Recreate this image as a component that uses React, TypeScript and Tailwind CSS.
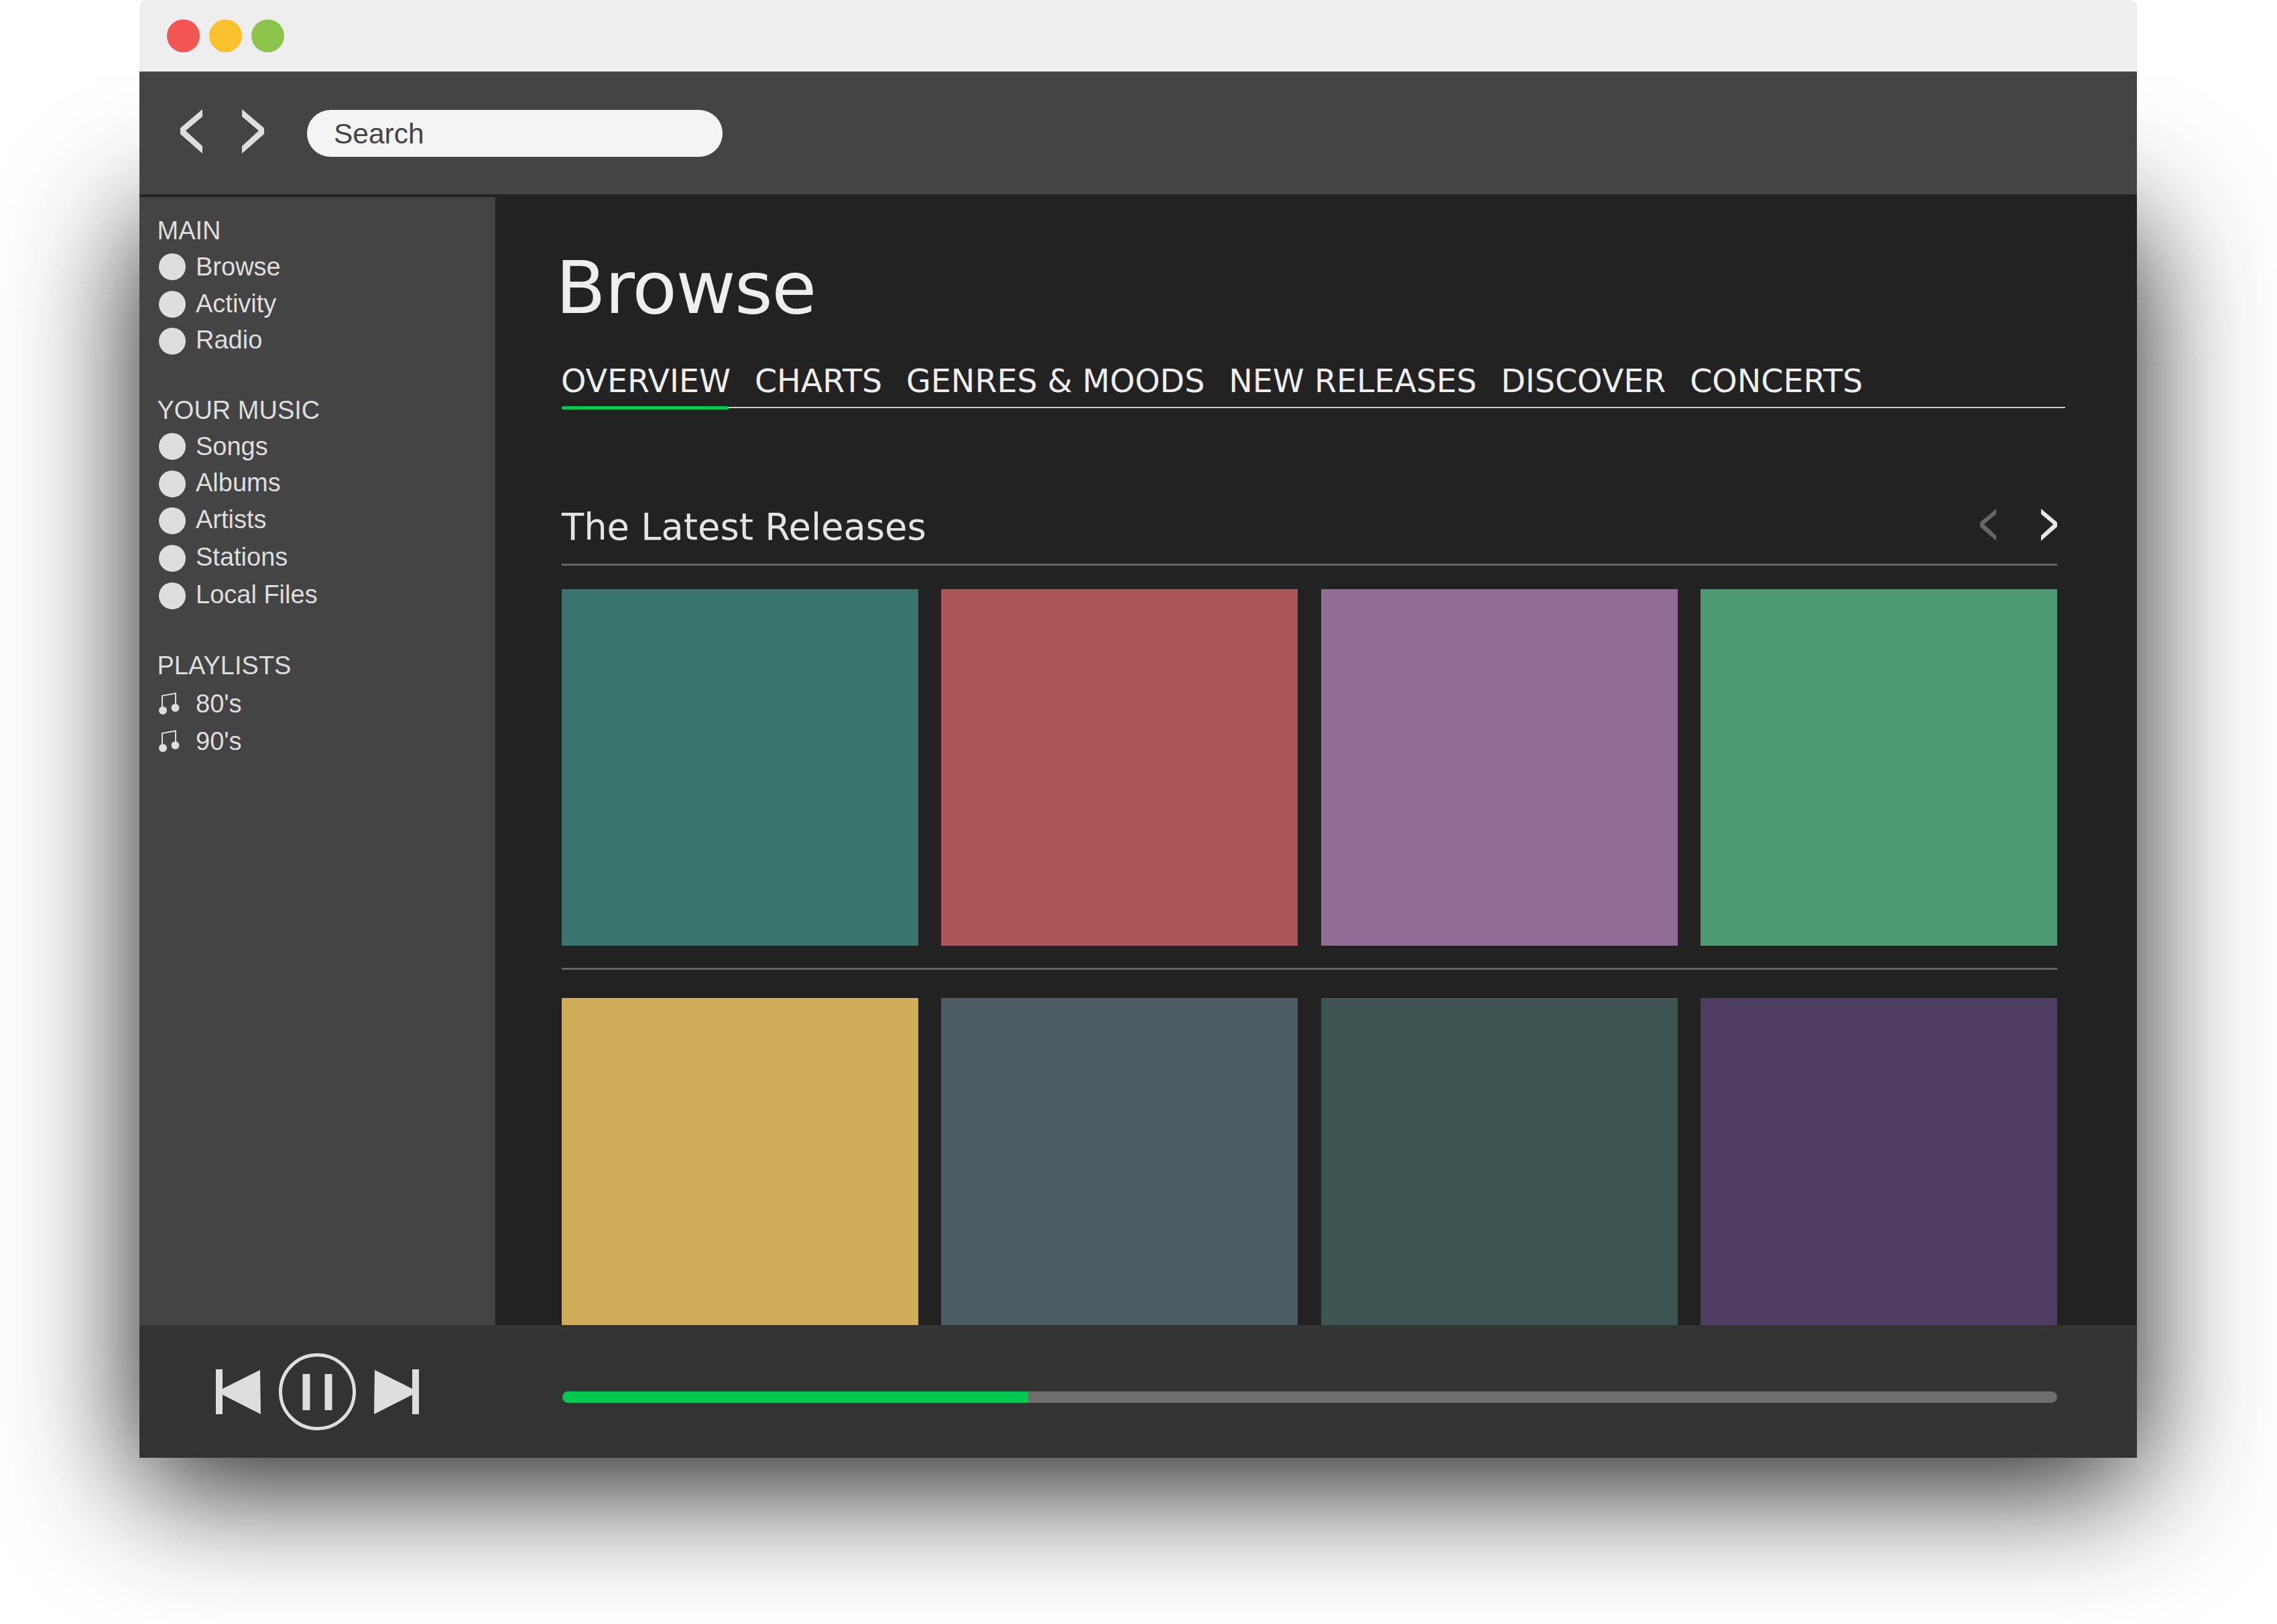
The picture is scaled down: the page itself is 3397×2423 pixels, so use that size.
const SANS = 'font-["Liberation_Sans",Arial,sans-serif]'

type NavItem = { label: string; nudge?: string }

const MAIN: NavItem[] = [{ label: 'Browse', nudge: 'mt-[2px]' }, { label: 'Activity' }, { label: 'Radio', nudge: '-mt-[4px]' }]
const MUSIC: NavItem[] = [
  { label: 'Songs', nudge: 'mt-[2px]' },
  { label: 'Albums', nudge: '-mt-[2px]' },
  { label: 'Artists', nudge: '-mt-[4px]' },
  { label: 'Stations', nudge: '-mt-[2px]' },
  { label: 'Local Files', nudge: '-mt-[2px]' },
]
const PLAYLISTS: NavItem[] = [
  { label: "80's", nudge: 'mt-[2px]' },
  { label: "90's", nudge: 'mt-[2px]' },
]
const TABS = ['OVERVIEW', 'CHARTS', 'GENRES & MOODS', 'NEW RELEASES', 'DISCOVER', 'CONCERTS']
const TILES = [
  ['bg-[#39746f]', 'bg-[#aa5558]', 'bg-[#906c95]', 'bg-[#4d9a72]'],
  ['bg-[#cfac58]', 'bg-[#4c5a61]', 'bg-[#3f5553]', 'bg-[#4f3d62]'],
]

function ChevronLeft({ className }: { className: string }) {
  return (
    <svg viewBox="0 0 33 66" className={className} fill="currentColor">
      <polygon points="33,0 33,11 8,32 33,55 33,66 0,37 0,28" />
    </svg>
  )
}

function ChevronRight({ className }: { className: string }) {
  return (
    <svg viewBox="0 0 33 66" className={className} fill="currentColor">
      <polygon points="0,0 0,11 25,32 0,55 0,66 33,37 33,28" />
    </svg>
  )
}

function NoteIcon() {
  return (
    <svg viewBox="0 0 31 33" className="w-[31px] h-[33px] text-[#dedede]" fill="none">
      <circle cx="6" cy="27" r="6" fill="currentColor" />
      <circle cx="24.500" cy="23" r="6" fill="currentColor" />
      <path d="M5 26V5L25 1.500V23" stroke="currentColor" strokeWidth="2" />
    </svg>
  )
}

function NavRow({ item, icon }: { item: NavItem; icon?: boolean }) {
  return (
    <div className="flex items-center h-[55.7px] text-[38px] text-[#dedede]">
      <div className="w-[57.500px] pl-[2.500px] shrink-0">
        {icon ? <NoteIcon /> : <div className="w-[40px] h-[40px] rounded-full bg-[#dedede]" />}
      </div>
      <span className={item.nudge}>{item.label}</span>
    </div>
  )
}

function NavSection({ title, items, icon, titleHeight }: { title: string; items: NavItem[]; icon?: boolean; titleHeight: string }) {
  return (
    <section>
      <h3 className={`${titleHeight} leading-[56px] text-[38px] text-[#dedede]`}>{title}</h3>
      {items.map((item) => (
        <NavRow key={item.label} item={item} icon={icon} />
      ))}
    </section>
  )
}

function Player() {
  return (
    <div className="flex items-center gap-[27px] text-[#dedede]">
      <svg viewBox="0 0 67 67" className="w-[67px] h-[67px]" fill="currentColor">
        <rect x="0" y="0" width="10" height="67" />
        <polygon points="10,29 66,1 67,67 10,38" />
      </svg>
      <svg viewBox="0 0 115 115" className="w-[115px] h-[115px]" fill="currentColor">
        <circle cx="57.500" cy="57.500" r="55" fill="none" stroke="currentColor" strokeWidth="5" />
        <rect x="35.500" y="31" width="11" height="54" />
        <rect x="68.500" y="31" width="11" height="54" />
      </svg>
      <svg viewBox="0 0 67 67" className="w-[67px] h-[67px]" fill="currentColor">
        <rect x="57" y="0" width="10" height="67" />
        <polygon points="57,29 1,1 0,67 57,38" />
      </svg>
    </div>
  )
}

export default function App() {
  return (
    <div className={`w-[3397px] h-[2423px] overflow-hidden bg-white pl-[208px] ${SANS}`}>
      <div className="w-[2980px] h-[2175px] flex flex-col">
        {/* title and toolbar stay above the body's shadow */}
        <header className="relative z-10 h-[107px] shrink-0 flex items-center gap-[14px] pl-[41px] bg-[#eeeeee] border-b border-[#bbbbbb] rounded-t-[10px]">
          <div className="w-[49px] h-[49px] rounded-full bg-[#f25552]" />
          <div className="w-[49px] h-[49px] rounded-full bg-[#fcc12f]" />
          <div className="w-[49px] h-[49px] rounded-full bg-[#8dc44c]" />
        </header>
        <div className="relative z-10 h-[183px] shrink-0 flex items-center pl-[61px] bg-[#444444] text-[#dedede]">
          <ChevronLeft className="w-[33px] h-[66px] -mt-[5px]" />
          <ChevronRight className="w-[33px] h-[66px] -mt-[5px] ml-[59px]" />
          <div className="ml-[64px] w-[620px] h-[70px] rounded-full bg-[#f4f4f4] pl-[40px] pt-[3px] flex items-center text-[42.500px] text-[#444444]">
            Search
          </div>
        </div>
        <div className="relative z-10 h-[4px] shrink-0 bg-[#222222]" />

        <div className="flex-1 min-h-0 flex flex-col shadow-[0_40px_180px_rgba(0,0,0,0.9)]">
          <div className="flex-1 min-h-0 flex">
            <aside className="w-[531px] shrink-0 bg-[#444444] border-r border-[#3a3a3a] pl-[26.500px] pt-[22px] flex flex-col">
              <NavSection title="MAIN" items={MAIN} titleHeight="h-[54px]" />
              <div className="h-[47px]" />
              <NavSection title="YOUR MUSIC" items={MUSIC} titleHeight="h-[54px]" />
              <div className="h-[48px]" />
              <NavSection title="PLAYLISTS" items={PLAYLISTS} icon titleHeight="h-[57px]" />
            </aside>
            <main className="flex-1 min-w-0 overflow-hidden bg-[#222222] pl-[99px] pr-[119px] pt-[81px] font-['DejaVu_Sans',sans-serif]">
              <h1 className="-ml-[9px] text-[109px] leading-none tracking-[-1.500px] text-[#eeeeee]">Browse</h1>
              <nav className="mt-[55px] -mr-[12px] flex gap-[37px] h-[70px] border-b-2 border-[#cccccc] text-[47.500px] leading-[60px] text-[#eeeeee]">
                {TABS.map((tab, i) => (
                  <div key={tab} className="relative h-[70px] -ml-[1px]">
                    {tab}
                    {i === 0 && <div className="absolute left-[1px] right-[3px] top-[67px] h-[5px] rounded-full bg-[#00c853]" />}
                  </div>
                ))}
              </nav>
              <div className="mt-[146px] h-[89px] flex items-start justify-between border-b-[3px] border-[#666666]">
                <h2 className="text-[54.300px] leading-[64px] text-[#e4e4e4]">The Latest Releases</h2>
                <div className="flex gap-[67px] pt-[4px]">
                  <ChevronLeft className="w-[24px] h-[48px] text-[#666666]" />
                  <ChevronRight className="w-[24px] h-[48px] text-[#e6e6e6]" />
                </div>
              </div>
              <div className="mt-[35px] grid grid-cols-4 gap-x-[34.500px]">
                {TILES[0].map((c) => (
                  <div key={c} className={`h-[532px] ${c}`} />
                ))}
              </div>
              <div className="mt-[33px] border-b-[3px] border-[#666666]" />
              <div className="mt-[42px] grid grid-cols-4 gap-x-[34.500px]">
                {TILES[1].map((c) => (
                  <div key={c} className={`h-[532px] ${c}`} />
                ))}
              </div>
            </main>
          </div>
          <footer className="relative h-[198px] shrink-0 flex items-center bg-[#333333] pl-[114px]">
            <Player />
            <div className="ml-[214px] mt-[16px] w-[2230px] h-[17px] rounded-full bg-[#6e6e6e] overflow-hidden">
              <div className="w-[695px] h-full bg-[#00c853]" />
            </div>
          </footer>
        </div>
      </div>
    </div>
  )
}
